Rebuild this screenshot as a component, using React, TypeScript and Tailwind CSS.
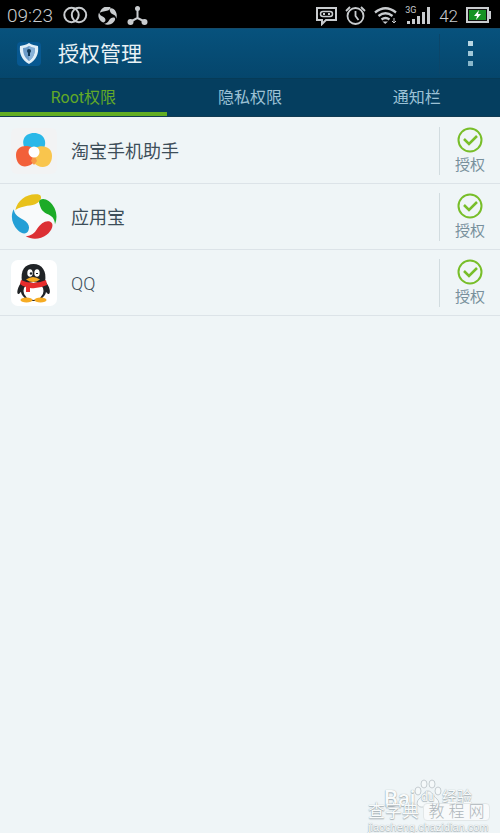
import React from "react";

const appFont = 'font-["Roboto","Noto_Sans_CJK_SC",sans-serif]';

function StatusBar() {
  return (
    <div className="flex h-7 items-center justify-between bg-black pt-1 pr-2 pl-[7px] text-[#c9cccf]">
      <div className="flex items-center gap-2.5">
        <time className="text-[19px] leading-6 font-light">09:23</time>
        <svg width="25" height="20" viewBox="0 0 25 20" fill="none" stroke="currentColor" strokeWidth="2">
          <circle cx="8.500" cy="9" r="7.200" />
          <circle cx="16" cy="9" r="7.200" />
        </svg>
        <svg width="19" height="19" viewBox="18 28 138 138" fill="currentColor">
          <SwirlPaths />
        </svg>
        <svg width="22" height="20" viewBox="0 0 22 20" fill="currentColor" stroke="currentColor">
          <path d="M10.500 3v9L3 16M10.500 12l8 4" fill="none" strokeWidth="2" />
          <circle cx="10.500" cy="2.500" r="2.500" stroke="none" />
          <circle cx="3.500" cy="16" r="3" stroke="none" />
          <circle cx="17.500" cy="16" r="3" stroke="none" />
        </svg>
      </div>
      <div className="flex items-center gap-2">
        <svg width="21" height="20" viewBox="0 0 21 20" fill="none" stroke="currentColor" strokeWidth="2">
          <path d="M1 2h19v12H10l-4 4v-4H1z" />
          <rect x="4.500" y="5.500" width="12" height="5" rx="2.500" strokeWidth="1.500" />
          <path d="M7 8h2M12 8h2" />
        </svg>
        <svg width="21" height="20" viewBox="0 0 21 20" fill="none" stroke="currentColor" strokeWidth="1.800">
          <circle cx="10.500" cy="10" r="8" />
          <path d="M10.500 5v5l3 4M1 5l4-4M20 5l-4-4" />
        </svg>
        <svg width="23" height="20" viewBox="0 0 23 20" fill="none" stroke="currentColor" strokeWidth="2.300">
          <path d="M1 6.500q10.500-8.500 21 0M4.500 10q7-5.500 14 0M7.500 13.500q4-3 8 0" />
          <path d="M8.500 15.500h5.500L11.200 18z" fill="currentColor" stroke="none" />
          <path d="M20 12v5M18 15l2 2 2-2" strokeWidth="1" />
        </svg>
        <div className="relative">
          <span className="absolute top-0 left-0 text-[9px] leading-[9px]">3G</span>
          <svg width="26" height="20" viewBox="0 0 26 20" fill="currentColor">
            <path d="M2 15h3v3H2zM7 13h3v5H7zM12 10h3v8h-3zM17 6h3v12h-3zM22 1h3v17h-3z" />
          </svg>
        </div>
        <span className="text-[17px] leading-6 font-light">42</span>
        <svg width="26" height="20" viewBox="0 0 26 20">
          <rect x="1" y="2" width="21" height="14" fill="#111" stroke="currentColor" strokeWidth="2" />
          <rect x="3" y="4" width="17" height="10" fill="#169322" />
          <path d="M23 5h2v8h-2z" fill="currentColor" />
          <path d="m13 4-5 6h3l-1 4 5-6h-3z" fill="white" />
        </svg>
      </div>
    </div>
  );
}

function SwirlPaths({ colored = false }: { colored?: boolean }) {
  return (
    <>
      <path fill={colored ? "#e8c11b" : undefined} d="M31 70C38 40 65 20 98 23C113 25 110 40 97 49C80 60 55 54 31 70z" />
      <path fill={colored ? "#1cab27" : undefined} d="M103 50C98 36 118 32 131 43C153 60 160 88 150 113C149 94 141 88 125 81C110 74 106 63 103 50z" />
      <path fill={colored ? "#dc3034" : undefined} d="M136 105C149 111 141 132 125 144C107 158 82 160 62 149C80 147 88 140 96 127C108 109 122 100 136 105z" />
      <path fill={colored ? "#249fd6" : undefined} d="M26 68C30 87 40 91 55 99C71 108 75 120 70 132C64 145 49 141 38 130C20 112 16 88 26 68z" />
    </>
  );
}

function ShieldLogo() {
  return (
    <svg className="size-6" viewBox="0 0 24 24">
      <rect width="24" height="24" rx="4" fill="#075891" />
      <path d="M12 1c3 2 6 2 9 3 1 8-2 14-9 18C5 18 2 12 3 4c3-1 6-1 9-3z" fill="#e1eff8" />
      <path d="M12 4c2 1 4 2 6 2 0 6-2 10-6 13-4-3-6-7-6-13 2 0 4-1 6-2z" fill="#6c9bc8" />
      <path d="M12 4c2 1 4 2 6 2 0 6-2 10-6 13z" fill="#87b1d8" />
      <circle cx="12" cy="9" r="2" fill="#103857" />
      <path d="M11 9h2v5h-2z" fill="#103857" />
    </svg>
  );
}

function HelperIcon() {
  return (
    <svg className="size-[46px]" viewBox="0 0 46 46">
      <rect width="46" height="46" rx="6" fill="#f2f3f4" />
      <path d="M15 22C9 14 13 5 23 5s14 9 9 17z" fill="#2ab8e8" />
      <path d="M22 20C15 16 5 18 5 27c0 12 11 16 20 5z" fill="#f2603a" />
      <path d="M24 20c8-4 17-1 17 8 0 12-12 15-20 5z" fill="#f9c54d" />
      <path d="M23 26 20 33l3 4 3-4z" fill="#f79a48" />
      <circle cx="23" cy="24" r="5.500" fill="#fff" />
    </svg>
  );
}

function SwirlIcon() {
  return (
    <svg className="size-[46px]" viewBox="18 22 138 138">
      <circle cx="88" cy="91" r="58" fill="#f8fafb" />
      <SwirlPaths colored />
    </svg>
  );
}

function QQIcon() {
  return (
    <svg className="size-[46px]" viewBox="0 0 46 46">
      <rect width="46" height="46" rx="7" fill="#fff" />
      <path d="M12 20C6 27 5 35 8 34l6-7m19-7c7 7 7 15 4 14l-7-7" fill="#202326" />
      <ellipse cx="22.500" cy="29" rx="13" ry="12" fill="#202326" />
      <path d="M11 22C9 10 14 4 22.500 4S36 11 34 22z" fill="#202326" />
      <ellipse cx="22.500" cy="31" rx="10" ry="9" fill="#fff" />
      <ellipse cx="15.500" cy="40" rx="6" ry="2.500" fill="#f6ac24" />
      <ellipse cx="29.500" cy="40" rx="6" ry="2.500" fill="#f6ac24" />
      <path d="M10 20q12 6 25 0l1 5q-8 4-17 3v4h-4v-5q-4-1-6-3z" fill="#e62c2c" />
      <ellipse cx="19" cy="13" rx="2.700" ry="3.800" fill="#fff" />
      <ellipse cx="26" cy="13" rx="2.700" ry="3.800" fill="#fff" />
      <circle cx="20" cy="13.500" r="1.200" fill="#17202a" />
      <path d="M25 14q1-2 2 0" fill="none" stroke="#17202a" />
      <path d="M15 19.500q7-5 14 0-7 5-14 0z" fill="#f6ac24" />
    </svg>
  );
}

const apps = [
  { name: "淘宝手机助手", weight: "font-normal", icon: <HelperIcon /> },
  { name: "应用宝", weight: "font-normal", icon: <SwirlIcon /> },
  { name: "QQ", weight: "font-light", icon: <QQIcon /> },
];

function AppRow({ name, weight, icon }: { name: string; weight: string; icon: React.ReactNode }) {
  return (
    <li className="flex h-[66px] items-center border-b border-[#dce3e8] pl-[11px]">
      {icon}
      <span className={`ml-3.5 flex-1 pt-0.5 text-[18px] leading-6 text-[#3d4e59] ${weight}`}>{name}</span>
      <button
        aria-label={`${name} 授权`}
        className="flex h-12 w-[61px] flex-col items-center justify-center border-l border-[#d2dce0] pt-px text-[15px] leading-5 text-[#78909c]"
      >
        <svg className="mb-0.5 size-[26px] shrink-0" viewBox="0 0 26 26" fill="none" stroke="#78be29">
          <circle cx="13" cy="13" r="11.500" strokeWidth="2" />
          <path d="m7 12 5 5 8-8" strokeWidth="2.500" />
        </svg>
        <span>授权</span>
      </button>
    </li>
  );
}

function Watermark() {
  return (
    <div aria-hidden="true" className="pointer-events-none absolute right-2.5 bottom-0 h-[54px] w-[122px] text-[#f9fbfb] [text-shadow:0_0_1px_#939fa5,0_1px_1px_#a8b2b7]">
      <svg className="absolute top-0 left-[46px]" width="28" height="30" viewBox="0 0 28 30" fill="#f5f9fa" stroke="#c5cdd1">
        <ellipse cx="4" cy="12" rx="3" ry="4" />
        <ellipse cx="10" cy="5" rx="3" ry="4" />
        <ellipse cx="18" cy="5" rx="3" ry="4" />
        <ellipse cx="24" cy="12" rx="3" ry="4" />
        <path d="M14 12c4 0 5 5 9 8 4 4 1 9-4 8-3-1-7-1-10 0-5 1-8-4-4-8 4-3 5-8 9-8z" />
      </svg>
      <span className="absolute top-2.5 left-4 text-[22px] leading-5 font-medium">Bai</span>
      <span className="absolute top-3 left-[53px] text-[12px] leading-3">du</span>
      <span className="absolute top-2.5 left-[74px] text-[15px] leading-4">经验</span>
      <span className="absolute top-6 left-0 text-[17px] leading-[17px]">查字典</span>
      <div className="absolute top-6 right-0 flex h-[18px] w-[67px] items-center justify-center gap-1 rounded-sm border border-[#e2e7e8] bg-[#f8fafb] text-[16px] leading-4 font-light text-[#aeb6ba] [text-shadow:none]">
        <span>教</span><span>程</span><span>网</span>
      </div>
      <span className='absolute bottom-0 left-0 font-["Liberation_Sans",sans-serif] text-[11px] leading-3'>jiaocheng.chazidian.com</span>
    </div>
  );
}

export default function App() {
  const [active, setActive] = React.useState(0);
  return (
    <div className={`relative min-h-screen overflow-hidden bg-[#eff5f7] ${appFont}`}>
      <StatusBar />
      <header className="flex h-[50px] items-center border-t border-[#164b6a] bg-linear-to-b from-[#07527d] to-[#05466c] pl-[17px] text-[#e9f2f6]">
        <ShieldLogo />
        <h1 className="ml-[17px] flex-1 text-[21px] leading-7">授权管理</h1>
        <button aria-label="更多选项" className="flex h-10 w-[61px] flex-col items-center justify-center gap-[5px] border-l border-[#0b466a]">
          <span className="size-[5px] bg-[#b9d7e3]" />
          <span className="size-[5px] bg-[#a1c8d8]" />
          <span className="size-[5px] bg-[#89b7ca]" />
        </button>
      </header>
      <div role="tablist" className="grid h-[39px] grid-cols-3 border-y border-t-[#063b57] border-b-[#113b53] bg-[#053e5f]">
        {["Root权限", "隐私权限", "通知栏"].map((label, index) => (
          <button
            key={label}
            role="tab"
            aria-selected={active === index}
            onClick={() => setActive(index)}
            className={`border-b-4 pt-1 text-[16px] leading-6 ${active === index ? "border-[#62ad22] text-[#62a927]" : "border-transparent text-[#9bc1d5]"}`}
          >
            {label}
          </button>
        ))}
      </div>
      <main role="tabpanel">
        <ul className="pt-px">{apps.map((app) => <AppRow key={app.name} {...app} />)}</ul>
      </main>
      <Watermark />
    </div>
  );
}
